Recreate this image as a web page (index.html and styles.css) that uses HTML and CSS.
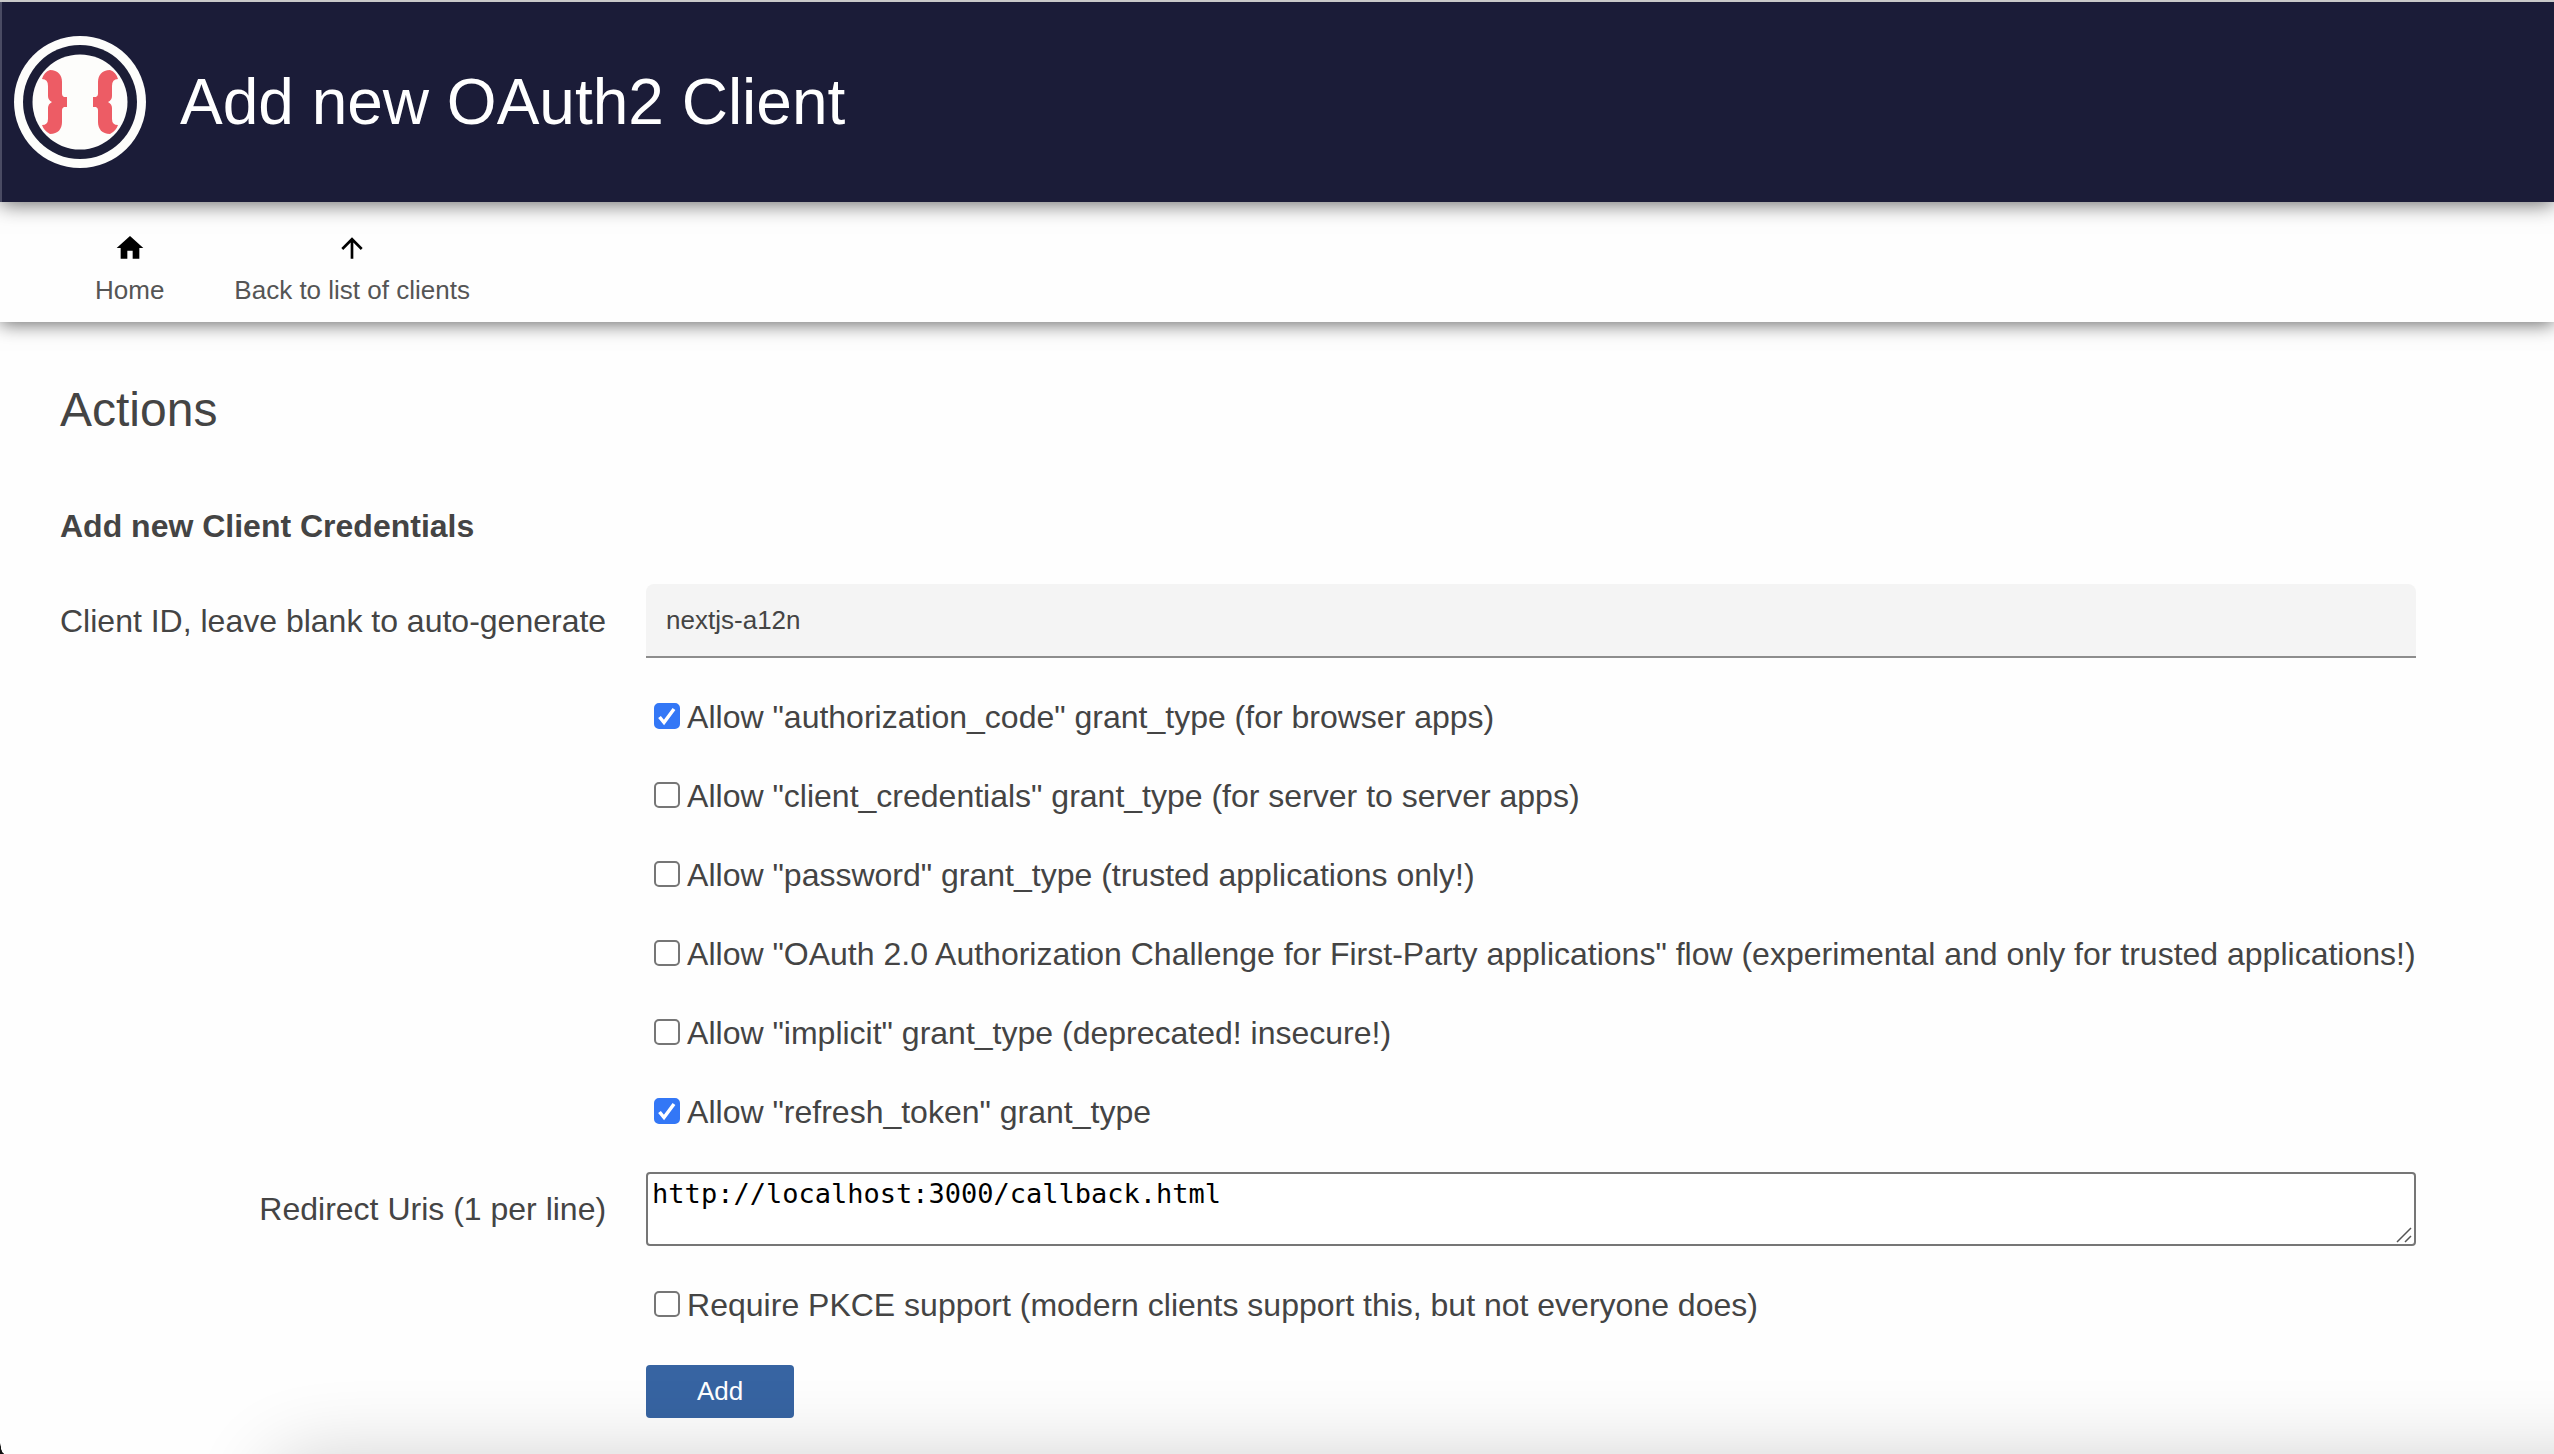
FILE: index.html
```html
<!DOCTYPE html>
<html lang="en">
<head>
<meta charset="utf-8">
<title>Add new OAuth2 Client</title>
<link rel="stylesheet" href="styles.css">
</head>
<body>
<header class="top-bar">
  <svg class="logo" viewBox="0 0 132 132" aria-hidden="true">
    <circle cx="66" cy="66" r="66" fill="#fdfdfb"/>
    <circle cx="66" cy="66" r="57" fill="#1b1d36"/>
    <circle cx="66" cy="66" r="47.500" fill="#fdfdfb"/>
    <g fill="#ed5c65">
      <path id="brace" d="M28 43 Q30 36 36 34 C44 34 48 39 48 46 V58 Q48 60 50 61 H53 V71 H50 Q48 72 48 74 V86 C48 93 44 98 36 98 Q30 95 28 89 Q34 89 34 83 V72 Q34 68 38 66 Q34 64 34 60 V50 Q34 43 28 43 Z"/>
      <use href="#brace" transform="matrix(-1 0 0 1 132 0)"/>
    </g>
  </svg>
  <h1 class="title">Add new OAuth2 Client</h1>
</header>
<nav class="nav">
  <a class="nav-link" href="#">
    <svg class="nav-icon" viewBox="0 0 24 24" aria-hidden="true"><path d="M10 20v-6h4v6h5v-8h3L12 3 2 12h3v8z"/></svg>
    Home
  </a>
  <a class="nav-link" href="#">
    <svg class="nav-icon" viewBox="0 0 24 24" aria-hidden="true"><path d="M4 12l1.410 1.410L11 7.830V20h2V7.830l5.580 5.590L20 12l-8-8-8 8z"/></svg>
    Back to list of clients
  </a>
</nav>
<main class="content">
  <h2 class="section-title">Actions</h2>
  <h3 class="form-title">Add new Client Credentials</h3>
  <form class="form">
    <label class="label" for="client-id">Client ID, leave blank to auto-generate</label>
    <input class="text-input" id="client-id" type="text" value="nextjs-a12n">
    <label class="check"><input type="checkbox" checked>Allow "authorization_code" grant_type (for browser apps)</label>
    <label class="check"><input type="checkbox">Allow "client_credentials" grant_type (for server to server apps)</label>
    <label class="check"><input type="checkbox">Allow "password" grant_type (trusted applications only!)</label>
    <label class="check"><input type="checkbox">Allow "OAuth 2.0 Authorization Challenge for First-Party applications" flow (experimental and only for trusted applications!)</label>
    <label class="check"><input type="checkbox">Allow "implicit" grant_type (deprecated! insecure!)</label>
    <label class="check"><input type="checkbox" checked>Allow "refresh_token" grant_type</label>
    <label class="label" for="uris">Redirect Uris (1 per line)</label>
    <div class="area-wrap">
      <textarea class="area" id="uris" rows="2" spellcheck="false">http://localhost:3000/callback.html</textarea>
      <svg class="grip" viewBox="0 0 16 16" aria-hidden="true"><path d="M1 15 15 1M9 15l6-6"/></svg>
    </div>
    <label class="check"><input type="checkbox">Require PKCE support (modern clients support this, but not everyone does)</label>
    <button class="button" type="button">Add</button>
  </form>
</main>
</body>
</html>
```
FILE: styles.css
```css
* {
  box-sizing: border-box;
}

html {
  background: #fefefe;
}

body {
  margin: 0;
  min-height: 100vh;
  border-top: 2px solid #c9c9c9;
  color: #444;
  font: 32px/39px "Liberation Sans", Arial, sans-serif;
  overflow-x: hidden;
}

/* Soft shade along the lower edge of the window */
body::after {
  content: "";
  position: fixed;
  z-index: 5;
  top: 100vh;
  left: 270px;
  right: -200px;
  height: 200px;
  border-radius: 40px;
  box-shadow: 0 4px 80px rgba(0, 0, 0, 0.19);
  pointer-events: none;
}

/* Rounded window corner */
body::before {
  content: "";
  position: fixed;
  z-index: 6;
  left: 0;
  bottom: 0;
  width: 4px;
  height: 14px;
  background: radial-gradient(4px 14px at 100% 0, transparent 90%, #111 100%);
}

.top-bar {
  position: relative;
  z-index: 2;
  display: flex;
  align-items: center;
  gap: 34px;
  height: 200px;
  padding-left: 12px;
  border-left: 2px solid #4a4b63;
  background: #1b1c38;
  box-shadow: 0 2px 20px rgba(0, 0, 0, 0.6);
}

.logo {
  width: 132px;
  height: 132px;
}

.title {
  margin: 0;
  color: #fff;
  font-size: 64px;
  font-weight: 300;
  line-height: 80px;
}

.nav {
  position: relative;
  z-index: 1;
  display: flex;
  gap: 70px;
  padding: 30px 95px 17px;
  background: #fefefe;
  box-shadow: 0 2px 18px rgba(0, 0, 0, 0.6);
}

.nav-link {
  display: flex;
  flex-direction: column;
  align-items: center;
  gap: 11px;
  color: #555;
  font-size: 26px;
  line-height: 30px;
  text-decoration: none;
}

.nav-icon {
  width: 32px;
  height: 32px;
  fill: #000;
}

.content {
  padding: 59px 139px 36px 60px;
}

.section-title {
  margin: 0 0 68px;
  font-size: 48px;
  font-weight: 300;
  line-height: 58px;
}

.form-title {
  margin: 0 0 38px;
  font-size: 32px;
  line-height: 39px;
}

.form {
  display: grid;
  grid-template-columns: auto 1fr;
  gap: 40px;
}

.label {
  grid-column: 1;
  align-self: center;
  text-align: right;
  white-space: nowrap;
}

.text-input {
  width: 100%;
  height: 74px;
  padding: 0 20px;
  border: 0;
  border-bottom: 2px solid #8d8d8d;
  border-radius: 8px 8px 0 0;
  background: #f4f4f4;
  color: #444;
  font: 26px "Liberation Sans", Arial, sans-serif;
}

.check {
  grid-column: 2;
  display: flex;
  align-items: center;
  gap: 7px;
  padding-left: 8px;
  white-space: nowrap;
}

.check input {
  appearance: none;
  flex: none;
  width: 26px;
  height: 26px;
  margin: 0 0 3px;
  border: 2px solid #767676;
  border-radius: 5px;
  background: #fff;
}

.check input:checked {
  border-color: #3377f6;
  background: #3377f6 url('data:image/svg+xml,<svg xmlns="http://www.w3.org/2000/svg" viewBox="0 0 22 22"><path d="M3.500 12 8 17.500 18 4" fill="none" stroke="white" stroke-width="3.500"/></svg>') center / 22px 22px no-repeat;
}

.area-wrap {
  position: relative;
  display: flex;
}

.area {
  width: 100%;
  height: 74px;
  padding: 4px;
  border: 2px solid #767676;
  border-radius: 4px;
  background: #fff;
  color: #000;
  font: 27px/31px "DejaVu Sans Mono", monospace;
  resize: none;
}

.grip {
  position: absolute;
  right: 4px;
  bottom: 3px;
  width: 16px;
  height: 16px;
  fill: none;
  stroke: #555;
  stroke-width: 1.500;
}

.button {
  grid-column: 2;
  justify-self: start;
  width: 148px;
  height: 53px;
  padding: 0;
  border: 0;
  border-radius: 4px;
  background: #3764a2;
  color: #fff;
  font: 26px "Liberation Sans", Arial, sans-serif;
}
```
